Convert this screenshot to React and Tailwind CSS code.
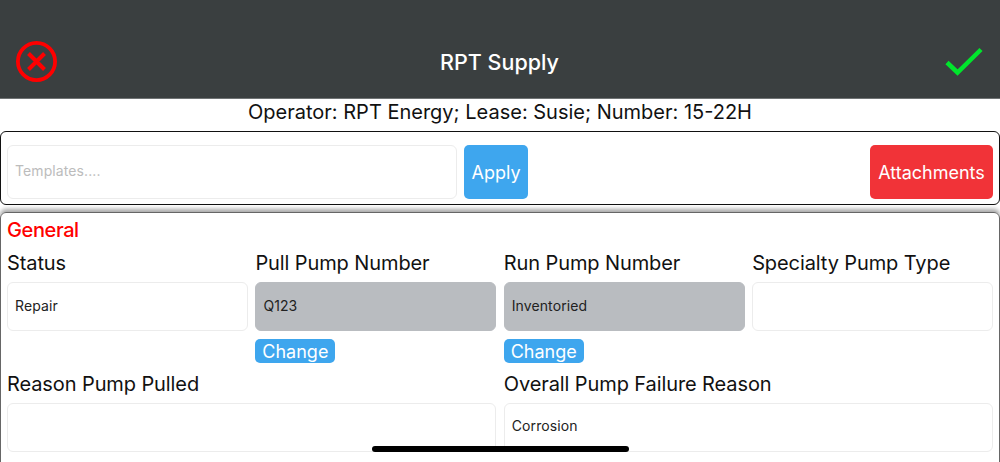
import React from "react";

const Field = ({ label, value, gray, change, className = "" }) => (
  <div className={className}>
    <div className="h-[30px] text-[20px] leading-[30px] tracking-[-0.1px] text-[#111]">{label}</div>
    <div
      className={`mt-[4px] flex h-[49px] items-center rounded-[6px] border px-[7px] pb-[3px] text-[14px] tracking-[0.1px] text-[#222] ${
        gray ? "border-[#b9bcc0] bg-[#b9bcc0]" : "border-[#ececec] bg-white"
      }`}
    >
      {value}
    </div>
    {change && (
      <button className="mt-[8px] block h-[24px] w-[80px] rounded-[5px] bg-[#3ea6ee] pt-px text-[18px] leading-[24px] text-white">
        Change
      </button>
    )}
  </div>
);

const App = () => {
  return (
    <div className="relative h-[462px] w-[1000px] overflow-hidden bg-white font-['Inter',sans-serif]">
      {/* Header */}
      <div className="flex h-[99px] items-end border-b border-[#6f7374] bg-[#3a3f40] pb-[16px] pl-[16px] pr-[17px]">
        <div className="flex-1">
          <svg width="41" height="41" viewBox="0 0 41 41" fill="none" stroke="#ff0000" strokeWidth="3.8" className="block">
            <circle cx="20.5" cy="20.5" r="18.6" />
            <path d="M12.5 12.5 L28.5 28.5 M28.5 12.5 L12.5 28.5" strokeWidth="4" />
          </svg>
        </div>
        <div className="mb-[6px] text-[21.5px] font-medium leading-[28px] text-white">RPT Supply</div>
        <div className="flex flex-1 justify-end">
          <svg width="38" height="30" viewBox="0 0 38 30" fill="none" stroke="#00e52c" strokeWidth="4.5" className="mb-[5px] block">
            <path d="M2 15.5 L12.5 25.5 L36 2.5" />
          </svg>
        </div>
      </div>

      <div className="h-[32px] text-center text-[20px] leading-[26px] text-[#111]">
        Operator: RPT Energy; Lease: Susie; Number: 15-22H
      </div>

      {/* Templates bar */}
      <div className="flex h-[74px] items-end rounded-[6px] border border-[#111] px-[6px] pb-[5px]">
        <div className="flex h-[54px] w-[450px] items-center rounded-[6px] border border-[#ececec] px-[7px] pb-[3px] text-[14px] tracking-[0.1px] text-[#bcbcbc]">
          Templates....
        </div>
        <button className="ml-[7px] h-[54px] w-[64px] rounded-[5px] bg-[#3ea6ee] text-[18px] text-white">Apply</button>
        <button className="ml-auto h-[54px] w-[123px] rounded-[5px] bg-[#f13338] text-[18px] text-white">
          Attachments
        </button>
      </div>

      {/* General */}
      <div className="mt-[7px] h-[260px] rounded-[6px] border border-[#666] px-[6px] shadow-[0_-3px_4px_rgba(0,0,0,0.35)]">
        <div className="h-[35px] text-[20px] font-medium leading-[34px] tracking-[-0.4px] text-[#ff0000]">General</div>
        <div className="grid grid-cols-4 gap-x-[7.5px] gap-y-[5.5px]">
          <Field label="Status" value="Repair" />
          <Field label="Pull Pump Number" value="Q123" gray change />
          <Field label="Run Pump Number" value="Inventoried" gray change />
          <Field label="Specialty Pump Type" value="" />
          <Field label="Reason Pump Pulled" value="" className="col-span-2" />
          <Field label="Overall Pump Failure Reason" value="Corrosion" className="col-span-2" />
        </div>
      </div>

      {/* iOS home indicator */}
      <div className="absolute bottom-[10px] left-[372px] h-[6px] w-[257px] rounded-full bg-black" />
    </div>
  );
};

export default App;
